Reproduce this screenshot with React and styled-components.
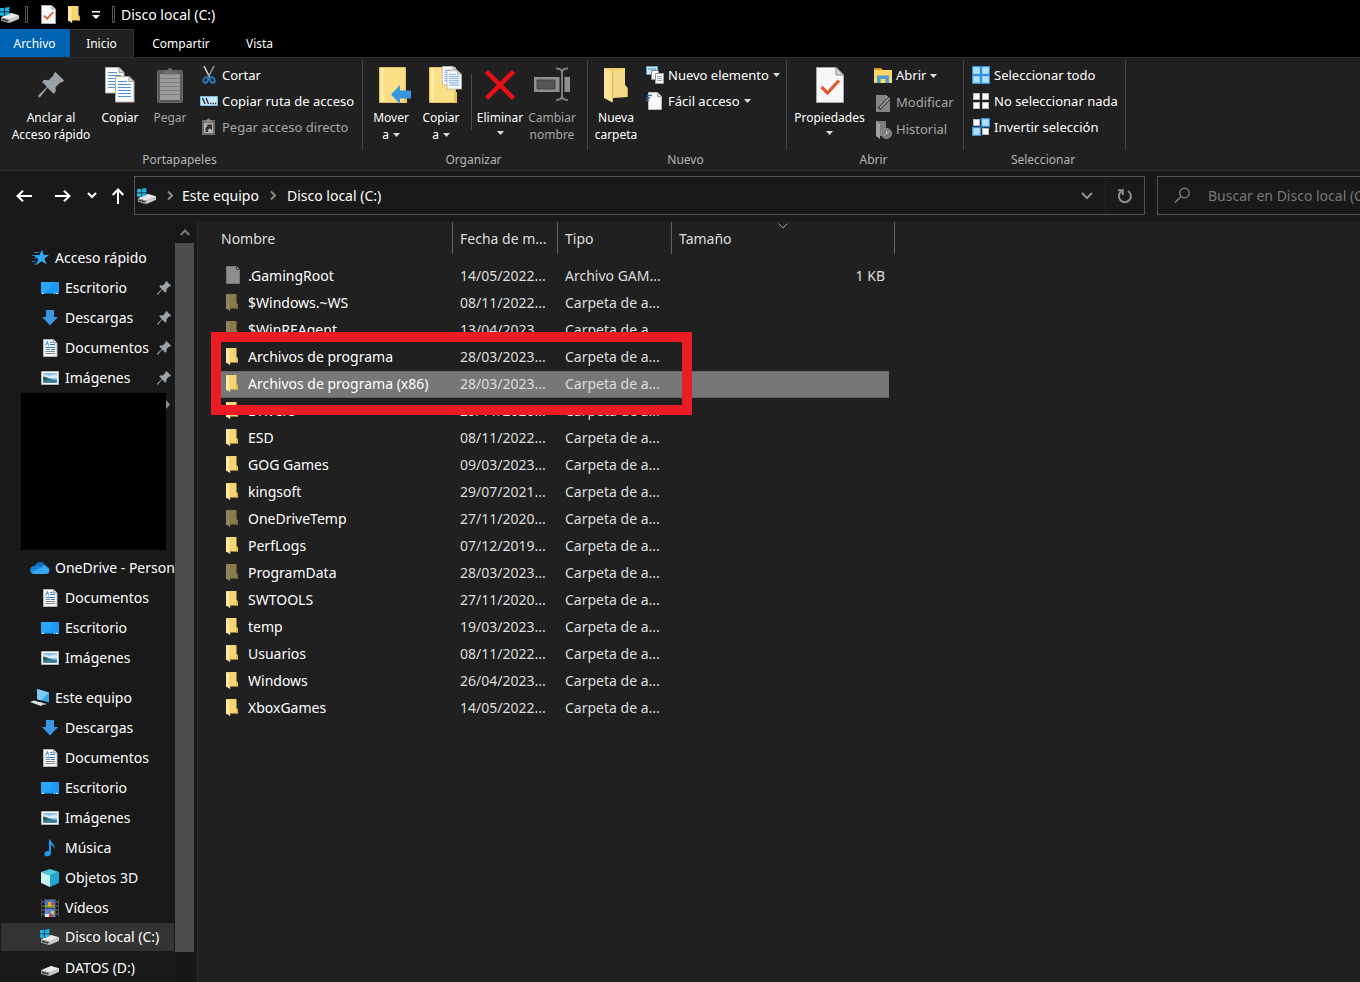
import React from "react";
import styled, { createGlobalStyle, css } from "styled-components";

const Global = createGlobalStyle`
  * { box-sizing: border-box; }
  body {
    margin: 0;
    background: #202020;
    color: #fff;
    font: 14px/20px "Noto Sans", "Open Sans", sans-serif;
  }
  button, input {
    margin: 0;
    padding: 0;
    border: 0;
    background: none;
    color: inherit;
    font: inherit;
  }
  a { color: inherit; text-decoration: none; }
  ul { margin: 0; padding: 0; list-style: none; }
  svg { display: block; flex: none; }
`;

/* ---------- icons ---------- */

const Drive = ({ windows = true }) => (
  <svg width="20" height="20" viewBox="0 0 20 20" aria-hidden="true">
    <path d="M1 12.5 11 8l8 2.2v3.6L9 18 1 15.8z" fill="#8d8d8d" />
    <path d="M1 12.3 11 8l8 2.4-9.6 4.2z" fill="#e9e9e9" />
    <path d="m9.4 14.6 9.6-4.2v3.4L9.4 18z" fill="#c9c9c9" />
    <path d="M1 12.3l8.4 2.3V18L1 15.8z" fill="#9a9a9a" />
    <path d="m2 13.6 6 1.6v1.2L2 14.9z" fill="#2e3a38" />
    {windows && (
      <path d="M0 3.3 4 2.8v3.6H0zM4.8 2.7 9.4 2v4.4H4.8zM0 7.2h4v3.7l-4-.5zM4.8 7.2h4.6v2L4.8 11z" fill="#1fb4e6" />
    )}
  </svg>
);

const CheckDoc = ({ w, h }) => (
  <svg width={w} height={h} viewBox="0 0 28 36" aria-hidden="true">
    <path d="M.5.5H20l7.5 7.5v27.5H.5z" fill="#f7f7f7" stroke="#a5a5a5" />
    <path d="M20 .5V8h7.5z" fill="#d6d6d6" stroke="#8c8c8c" />
    <path d="m5.500 20 6 6L23 13.500" fill="none" stroke="#e0592a" strokeWidth="3.200" />
  </svg>
);

const Folder = ({ w = 12, h = 17, dim }) => (
  <svg width={w} height={h} viewBox="0 0 24 34" preserveAspectRatio="none" opacity={dim ? 0.5 : 1} aria-hidden="true">
    <path d="M1 0h20v18l3 3v8H1z" fill="#f5d673" />
    <path d="M21 18l3 3v8h-4V18z" fill="#e3b94d" />
    <path d="M0 0l8 4v30l-6-4H0z" fill="#ffe9a2" />
    <path d="M8 4v30" stroke="#e3be60" />
  </svg>
);

const PinIcon = ({ size = 14 }) => (
  <svg width={size} height={size} viewBox="0 0 26 26" aria-hidden="true">
    <path d="M17.500 0 26 8.500l-2 2-1.500-.3-5 5 .3 4.300-2.300 2.300-6-6L1.800 25.500.2 24.800l.3-1.600 8.500-8.500L4 10l2.200-2.200 4.500.4 5-5L15.500 2z" fill="#9aa3aa" />
  </svg>
);

const Page = ({ x, y }) => (
  <g transform={`translate(${x} ${y})`}>
    <path d="M.5.5H14l5 5v20.500H.5z" fill="#fbfbfb" stroke="#b0b0b0" />
    <path d="M14 .5v5h5z" fill="#dcdcdc" stroke="#9d9d9d" />
    <path d="M3 5.500h9M3 8.500h13M3 11.500h13M3 14.500h13M3 17.500h13M3 20.500h13" stroke="#4f92dc" />
  </g>
);

const CopyIcon = () => (
  <svg width="30" height="36" viewBox="0 0 30 36" aria-hidden="true">
    <Page x={0} y={0} />
    <Page x={10} y={9} />
  </svg>
);

const PasteIcon = () => (
  <svg width="26" height="36" viewBox="0 0 26 36" aria-hidden="true">
    <rect x=".5" y="3.500" width="25" height="32" rx="1" fill="#5b5b5b" stroke="#666" />
    <path d="M3 7h20v26H3z" fill="#9b9b9b" />
    <path d="M3 11.500h20M3 15.500h20M3 19.500h20M3 23.500h20M3 27.500h20" stroke="#808080" />
    <path d="M5 7.500C6 4 10 5 11 2.500 11.500.5 14.500.5 15 2.500 16 5 20 4 21 7.500z" fill="#6e6e6e" />
  </svg>
);

const ScissorsIcon = () => (
  <svg width="18" height="18" viewBox="0 0 18 18" fill="none" aria-hidden="true">
    <path d="m4 0 5.500 11" stroke="#c8ccd0" strokeWidth="1.600" />
    <path d="M14 0 8.500 11" stroke="#8b9299" strokeWidth="1.600" />
    <ellipse cx="5.700" cy="14" rx="2.300" ry="3" transform="rotate(25 5.700 14)" stroke="#2583cf" strokeWidth="1.700" />
    <ellipse cx="12.300" cy="14" rx="2.300" ry="3" transform="rotate(-25 12.300 14)" stroke="#2583cf" strokeWidth="1.700" />
  </svg>
);

const PathIcon = () => (
  <svg width="18" height="18" viewBox="0 0 18 18" aria-hidden="true">
    <path d="M.5 4.500h17v9H.5z" fill="#cbe8fb" stroke="#7dbce8" />
    <path d="m2.500 6 2.500 6M6 6l2.500 6" stroke="#1b2a38" strokeWidth="1.400" />
    <path d="M10 11.500h1.300M12.500 11.500h1.300M15 11.500h1.300" stroke="#1b2a38" strokeWidth="1.300" />
  </svg>
);

const PasteLinkIcon = () => (
  <svg width="18" height="18" viewBox="0 0 18 18" aria-hidden="true">
    <path d="M2 2h13v15H2z" fill="#6c6c6c" />
    <path d="M5.500 2.500C6.500 2 7.500 1.500 8.500 0c1 1.500 2 2 3 2.500V4h-6z" fill="#8e8e8e" />
    <path d="M4 5h9v10H4z" fill="#b0b0b0" />
    <path d="M6 14c-1.500-3 0-5.500 2-6L6.500 6.500H12V12l-1.500-1.500C8.500 10.500 7.500 12 8 14z" fill="#333" />
  </svg>
);

const BigFolder = ({ children }) => (
  <svg width="42" height="38" viewBox="-8 0 42 38" aria-hidden="true">
    <path d="M1.500 1.500h26v25l1 1v9h-27z" fill="#fbdf86" stroke="#e2bf60" />
    <path d="M4.500 2v34" stroke="#ffefb4" strokeWidth="2" />
    <path d="M26 26h3v11h-3z" fill="#e9c35c" />
    {children}
  </svg>
);

const MoveIcon = () => (
  <BigFolder>
    <path d="M13 28.500 22 19v5.500h11v8H22V38z" fill="#3895e0" />
  </BigFolder>
);

const CopyToIcon = () => (
  <BigFolder>
    <g transform="translate(14 0) scale(.78 .72)">
      <Page x={0} y={0} />
      <Page x={6} y={6} />
    </g>
  </BigFolder>
);

const DeleteIcon = () => (
  <svg width="30" height="38" viewBox="0 0 30 38" aria-hidden="true">
    <path d="m1.500 5.500 27 27M28.500 5.500l-27 27" stroke="#e50f17" strokeWidth="4.500" />
  </svg>
);

const RenameIcon = () => (
  <svg width="38" height="38" viewBox="0 0 38 38" fill="none" aria-hidden="true">
    <path d="M1 11h36v15H1z" fill="#8f8f8f" />
    <path d="M4 14h18v9H4z" fill="#555" stroke="#444" />
    <path d="M29 5v28" stroke="#202020" strokeWidth="5" />
    <path d="M29 6v25M23 2.500c4 0 6 1 6 4 0-3 2-4 6-4M23 34c4 0 6-1 6-4 0 3 2 4 6 4" stroke="#7c7c7c" strokeWidth="2" />
  </svg>
);

const NewFolderIcon = () => (
  <svg width="24" height="36" viewBox="0 0 24 36" aria-hidden="true">
    <path d="M1 1h20v17l2.500 3v9H1z" fill="#f0cd6c" />
    <path d="M9 4 21 1v17l2.500 3v9L9 31z" fill="#f6d987" />
    <path d="M0 1l8.500 4v30.500L0 31z" fill="#fde49a" />
    <path d="M8.500 5v30" stroke="#d8b054" />
  </svg>
);

const NewItemIcon = () => (
  <svg width="18" height="18" viewBox="0 0 18 18" aria-hidden="true">
    <path d="M.5.5h11v8H.5z" fill="#cfe9f6" stroke="#5ba3cc" />
    <path d="M2 3h8" stroke="#3c8cc0" />
    <path d="M5.500 4.500h7v9h-7z" fill="#f2f2f2" stroke="#8c8c8c" />
    <path d="M9.500 7.500h8v10h-8z" fill="#f8f8f8" stroke="#9c9c9c" />
    <path d="M11 10.500h5M11 12.500h5M11 14.500h5" stroke="#8ba7bd" />
  </svg>
);

const EasyAccessIcon = () => (
  <svg width="18" height="18" viewBox="0 0 18 18" aria-hidden="true">
    <path d="M2.500.5h9l4 4v13h-13z" fill="#f8f8f8" stroke="#b9b9b9" />
    <path d="M11.500.5v4h4" fill="#ddd" stroke="#999" />
    <path d="M1 3.500h5M0 6h4M0 8.500h3" stroke="#2c6ea8" strokeWidth="1.300" />
  </svg>
);

const OpenIcon = () => (
  <svg width="18" height="18" viewBox="0 0 18 18" aria-hidden="true">
    <path d="M0 1h7l2 2H0z" fill="#e0961d" />
    <path d="M0 3h18v13H0z" fill="#fcd667" />
    <path d="M3 16V8.500h12V16h-3.500v-4h-5v4z" fill="#4b9bd6" />
  </svg>
);

const EditIcon = () => (
  <svg width="18" height="18" viewBox="0 0 18 18" aria-hidden="true">
    <path d="M2 1h10l4 4v13H2z" fill="#858585" />
    <path d="M12 1v4h4" fill="#aaa" />
    <path d="m5 15 10.500-11" stroke="#3c3c3c" strokeWidth="3.500" />
    <path d="m6 14 9.500-10" stroke="#a9a9a9" strokeWidth="1.500" />
  </svg>
);

const HistoryIcon = () => (
  <svg width="18" height="18" viewBox="0 0 18 18" aria-hidden="true">
    <path d="M2 0h10v15H2z" fill="#7b7b7b" />
    <path d="M2 0l4 3v15l-4-3z" fill="#a0a0a0" />
    <circle cx="12.500" cy="12.500" r="5" fill="#777" stroke="#999" />
    <path d="M12.500 9.500v3l-2.500 2M12.500 12.500l3-2" stroke="#c0c0c0" fill="none" />
  </svg>
);

const SelectGrid = ({ on }) => (
  <svg width="18" height="18" viewBox="0 0 18 18" aria-hidden="true">
    {[[0, 0], [9, 0], [0, 9], [9, 9]].map(([x, y], i) =>
      on[i] ? (
        <rect key={i} x={x + 0.5} y={y + 0.5} width="8" height="8" fill="#b5e0fb" stroke="#3193dd" strokeWidth="1.400" />
      ) : (
        <rect key={i} x={x + 1.500} y={y + 1.500} width="6" height="6" fill="#fff" stroke="#b8b8b8" />
      )
    )}
  </svg>
);

const StarIcon = () => (
  <svg width="20" height="20" viewBox="0 0 20 20" aria-hidden="true">
    <path d="M4 4.500h5M2 7.500h5M4 10h4M2 13.500h4M4 16h3" stroke="#1f78be" />
    <path d="m12 1.500 1.500 5.300 5.500.2-4.500 3.500 2 6-4.800-3.200L6 17l2.300-6L4 7.500l5.600-.5z" fill="#37a5f2" />
  </svg>
);

const DesktopIcon = () => (
  <svg width="20" height="20" viewBox="0 0 20 20" aria-hidden="true">
    <path d="M1 4h18v12H1z" fill="#1b9bf5" />
    <path d="M1 4h13L5 16H1z" fill="#38aefc" opacity=".6" />
    <path d="M1 15.500h18" stroke="#0b62a8" />
    <path d="M2 15.500h2M14 15.500h1M16 15.500h2" stroke="#dff1ff" />
  </svg>
);

const DownloadIcon = () => (
  <svg width="20" height="20" viewBox="0 0 20 20" aria-hidden="true">
    <path d="M6 2h8v7h4l-8 8.500L2 9h4z" fill="#3b94e4" />
  </svg>
);

const DocIcon = () => (
  <svg width="20" height="20" viewBox="0 0 20 20" aria-hidden="true">
    <path d="M3.500 1.500h10l3.500 3.500v13.500H3.500z" fill="#f8f8f8" stroke="#b5b5b5" />
    <path d="M13.500 1.500V5H17" fill="#ddd" stroke="#999" />
    <path d="m5.500 7.500 2-4 1 4M10 4.500h2.500M10 6.500h5M5.500 9.500h9.500M11 11.500h4" stroke="#2f83c4" fill="none" />
    <path d="M5.500 11.500h4.500M5.500 13.500h9.500M5.500 15.500h9.500" stroke="#7e8a94" />
  </svg>
);

const ImageIcon = () => (
  <svg width="20" height="20" viewBox="0 0 20 20" aria-hidden="true">
    <path d="M1.500 3.500h17v13h-17z" fill="#fff" stroke="#b5b5b5" />
    <path d="M3 5h14v10H3z" fill="#8dc4ee" />
    <path d="M3 7.500c3-2 5 1 8 0s4-1 6-.500V10H3z" fill="#d7ecfa" />
    <path d="M3 8.500c4 0 6 3.500 14 3.500v1H3z" fill="#2f6b62" />
    <path d="M3 12.500h14V15H3z" fill="#3d7fae" />
  </svg>
);

const CloudIcon = () => (
  <svg width="20" height="20" viewBox="0 0 20 20" aria-hidden="true">
    <path d="M5 8a5.500 5.500 0 0 1 10-1.500L12 11z" fill="#0f6cbd" />
    <path d="M4.500 8C7 7 9 8 11 9.500L7 16H4a4 4 0 0 1 .5-8z" fill="#1583d8" />
    <path d="M11 9.500C12.500 7 16 6.500 17 9a3.600 3.600 0 0 1-1 7H5c-2 0-3-1-3.500-2z" fill="#35a7f0" />
  </svg>
);

const ComputerIcon = () => (
  <svg width="20" height="20" viewBox="0 0 20 20" aria-hidden="true">
    <path d="m7 1 12 3.500v10L7 11z" fill="#3ba5ec" />
    <path d="m7 1 12 3.500-8 8L7 11z" fill="#7fcbf8" />
    <path d="m10 14 7 2-3 1-7-2z" fill="#b5b5b5" />
    <path d="m0 14 4-1.500 10 3-3 2.500z" fill="#dde1e6" />
  </svg>
);

const MusicIcon = () => (
  <svg width="20" height="20" viewBox="0 0 20 20" aria-hidden="true">
    <path d="M9 1.500h1.500c.5 4 5 4.500 4 9.500-.5-2.500-2-3.500-3.500-4V15c0 4-6.500 4.500-6.500 1.200C4.500 13.500 7 12.500 9 13z" fill="#1c9cf0" />
  </svg>
);

const CubeIcon = () => (
  <svg width="20" height="20" viewBox="0 0 20 20" aria-hidden="true">
    <path d="m10 1 9 3-9 3.500L1 4z" fill="#4cc9dd" />
    <path d="m1 4 9 3.500V19l-9-4z" fill="#c5f3f4" />
    <path d="m19 4-9 3.500V19l9-4z" fill="#22a6cf" />
  </svg>
);

const VideoIcon = () => (
  <svg width="20" height="20" viewBox="0 0 20 20" aria-hidden="true">
    <path d="M1 1h18v18H1z" fill="#4a4a4a" />
    <path d="M3 1v18M17 1v18" stroke="#171717" strokeWidth="2" strokeDasharray="2 2" />
    <path d="M5 2h10v7.500H5z" fill="#4b6fc9" />
    <path d="M5 11h10v8H5z" fill="#5b86dd" />
    <path d="M5 7h10v2.500H5z" fill="#7ba437" />
    <path d="M8 4h4v4H8z" fill="#e1ac35" />
    <path d="M11 5h3v2h-3zM9 16h4v3H9z" fill="#c64a4a" />
    <path d="M5 16h4v3H5z" fill="#e6e6e6" />
    <path d="M11 13h3v3h-3z" fill="#eac13d" />
  </svg>
);

const FileIcon = () => (
  <svg width="14" height="18" viewBox="0 0 14 18" aria-hidden="true">
    <path d="M.5.5h10l3 3v14H.5z" fill="#8e8e8e" stroke="#777" />
    <path d="M10.500.5v3h3" fill="#8e8e8e" stroke="#444" />
  </svg>
);

const Line = ({ w, h, d, color = "#fff", stroke = 2 }) => (
  <svg width={w} height={h} viewBox={`0 0 ${w} ${h}`} fill="none" aria-hidden="true">
    <path d={d} stroke={color} strokeWidth={stroke} />
  </svg>
);

const Caret = () => (
  <svg width="7" height="4" viewBox="0 0 7 4" aria-hidden="true">
    <path d="M0 0h7L3.500 4z" fill="#dcdcdc" />
  </svg>
);

/* ---------- window frame ---------- */

const Window = styled.div`
  display: flex;
  flex-direction: column;
  height: 100vh;
  overflow: hidden;
`;

const TitleBar = styled.header`
  display: flex;
  flex: none;
  align-items: center;
  height: 29px;
  background: #000;
`;

const TitleTools = styled.div`
  display: flex;
  align-items: center;
  gap: 12px;
  padding: 0 12px;
`;

const TitleSeparator = styled.span`
  width: 3px;
  height: 17px;
  margin-left: ${(p) => (p.$spaced ? 5 : 0)}px;
  border: 1px solid #555;
`;

const IconButton = styled.button`
  display: flex;
  align-items: center;
  justify-content: center;
  flex: none;
  width: ${(p) => p.$w}px;
  height: ${(p) => p.$h || 20}px;
`;

const Title = styled.h1`
  margin: 0 0 0 6px;
  font-size: 14px;
  font-weight: 400;
`;

const Tabs = styled.nav`
  display: flex;
  flex: none;
  height: 28px;
  background: #000;
  font-size: 12px;
`;

const Tab = styled.button`
  width: ${(p) => p.$w}px;
  border: 1px solid transparent;
  border-width: 1px 1px 0 0;
  ${(p) => p.$kind === "file" && css`background: #0063b1;`}
  ${(p) =>
    p.$kind === "active" &&
    css`
      background: #202020;
      border-color: #333;
    `}
`;

/* ---------- ribbon ---------- */

const Ribbon = styled.section`
  display: flex;
  flex: none;
  height: 114px;
  border-top: 1px solid #2c2c2c;
  border-bottom: 1px solid #303030;
  background: #202020;
  font-size: 12px;
  line-height: 17px;
`;

const Group = styled.div`
  display: flex;
  flex-direction: column;
  flex: none;
  width: ${(p) => p.$w}px;
  padding-top: 2px;
`;

const Tools = styled.div`
  display: flex;
  height: 90px;
  padding-left: ${(p) => p.$pad || 0}px;
  border-right: 1px solid #444;
`;

const GroupLabel = styled.span`
  padding: 1px 4px 0 0;
  color: #b4b4b4;
  text-align: center;
`;

const BigButton = styled.button`
  display: flex;
  flex-direction: column;
  align-items: center;
  flex: none;
  width: ${(p) => p.$w}px;
  padding-top: 6px;
  white-space: nowrap;
  color: ${(p) => (p.disabled ? "#a6a6a6" : "#fff")};
`;

const BigIcon = styled.span`
  display: flex;
  align-items: center;
  height: 38px;
  margin-bottom: 5px;
`;

const LabelLine = styled.span`
  display: flex;
  align-items: center;
  gap: 4px;
  min-height: 14px;
`;

const SmallColumn = styled.div`
  display: grid;
  align-content: start;
  justify-items: start;
  grid-auto-rows: ${(p) => p.$pitch || 26}px;
  padding: 2px 0 0 2px;
`;

const SmallButton = styled.button`
  display: flex;
  align-items: center;
  gap: 4px;
  font-size: 13px;
  white-space: nowrap;
  color: ${(p) => (p.disabled ? "#a6a6a6" : "#fff")};
`;

const ToolDivider = styled.span`
  width: 1px;
  height: 56px;
  margin: 14px 3px 0 5px;
  background: #4c4c4c;
`;

function Big({ w, icon, lines, caret, disabled }) {
  return (
    <BigButton $w={w} disabled={disabled}>
      <BigIcon>{icon}</BigIcon>
      {lines.map((line, i) => (
        <LabelLine key={line}>
          {line}
          {caret && i > 0 && <Caret />}
        </LabelLine>
      ))}
      {caret && lines.length === 1 && (
        <LabelLine>
          <Caret />
        </LabelLine>
      )}
    </BigButton>
  );
}

function Small({ icon, label, caret, disabled }) {
  return (
    <SmallButton disabled={disabled}>
      {icon}
      {label}
      {caret && <Caret />}
    </SmallButton>
  );
}

/* ---------- address row ---------- */

const AddressRow = styled.div`
  display: flex;
  flex: none;
  height: 50px;
  padding: 5px 0 6px 4px;
  background: #191919;
`;

const AddressBox = styled.div`
  display: flex;
  align-items: center;
  flex: 1;
  margin-right: 12px;
  padding-left: 2px;
  border: 1px solid #535353;
`;

const Crumb = styled.a`
  white-space: nowrap;
`;

const Spacer = styled.span`
  flex: 1;
`;

const RefreshButton = styled(IconButton)`
  border-left: 1px solid #242424;
`;

const SearchBox = styled.label`
  display: flex;
  align-items: center;
  flex: 0 0 203px;
  gap: 17px;
  min-width: 0;
  padding-left: 16px;
  border: 1px solid #535353;
  border-right: 0;
`;

const SearchInput = styled.input`
  flex: 1;
  width: 0;
  min-width: 0;
  outline: 0;
  &::placeholder { color: #777; opacity: 1; }
`;

/* ---------- navigation tree ---------- */

const Body = styled.div`
  display: flex;
  flex: 1;
  min-height: 0;
  background: #191919;
`;

const Tree = styled.nav`
  flex: none;
  width: 175px;
  padding-top: 22px;
  overflow: hidden;
`;

const TreeGroup = styled.ul`
  margin-top: ${(p) => p.$gap || 0}px;
`;

const TreeLink = styled.a`
  display: flex;
  align-items: center;
  gap: 5px;
  height: 30px;
  padding-left: ${(p) => (p.$root ? 30 : 40)}px;
  white-space: nowrap;
  ${(p) =>
    p.$current &&
    css`
      background: #333;
      border: solid #191919;
      border-width: 0 1px 2px 1px;
      padding-left: 39px;
    `}
`;

const PinSlot = styled.span`
  margin: 0 4px 0 auto;
`;

const HiddenBlock = styled.div`
  display: flex;
  height: 157px;
  margin-left: 21px;
`;

const HiddenFill = styled.div`
  width: 145px;
  background: #000;
`;

const HiddenArrow = styled.span`
  padding-top: 7px;
`;

const ScrollBar = styled.div`
  display: flex;
  flex-direction: column;
  flex: none;
  width: 19px;
  padding-bottom: 30px;
  background: #171717;
`;

const ScrollThumb = styled.div`
  flex: 1;
  background: #4d4d4d;
`;

/* ---------- file list ---------- */

const Files = styled.main`
  flex: 1;
  min-width: 0;
  margin-left: 3px;
  padding: 1px 0 0 23px;
  border-left: 1px solid #2b2b2b;
  background: #202020;
`;

const TableWrap = styled.div`
  position: relative;
  width: max-content;
`;

const FileTable = styled.table`
  width: 674px;
  table-layout: fixed;
  border-collapse: separate;
  border-spacing: 0;
  color: #dedede;

  tbody::before {
    content: "";
    display: block;
    height: 9px;
  }
`;

const HeadCell = styled.th`
  position: relative;
  height: 32px;
  padding: 2px 7px 0;
  border-right: 1px solid #636363;
  text-align: left;
  font-weight: 400;
  white-space: nowrap;
  overflow: hidden;
  &:first-child { padding-left: 0; }
`;

const SortMark = styled.span`
  position: absolute;
  top: 1px;
  left: 50%;
  margin-left: -5px;
`;

const Row = styled.tr`
  td {
    ${(p) =>
      p.$selected &&
      css`
        background: #777;
        box-shadow: inset 0 1px #666, inset 0 -1px #666;
      `}
  }
`;

const Cell = styled.td`
  height: 27px;
  padding: 0 4px 1px 7px;
  overflow: hidden;
  white-space: nowrap;
  text-align: ${(p) => (p.$right ? "right" : "left")};
`;

const NameCell = styled(Cell)`
  padding-left: 5px;
  color: #fff;
`;

const NameInner = styled.span`
  display: flex;
  align-items: center;
`;

const FileGlyph = styled.span`
  width: 22px;
  padding-bottom: 2px;
`;

const Highlight = styled.div`
  position: absolute;
  top: 110px;
  left: -10px;
  width: 481px;
  height: 83px;
  border: 10px solid #ec1c24;
  pointer-events: none;
`;

const files = [
  [".GamingRoot", "14/05/2022...", "file"],
  ["$Windows.~WS", "08/11/2022...", "dim"],
  ["$WinREAgent", "13/04/2023...", "dim"],
  ["Archivos de programa", "28/03/2023..."],
  ["Archivos de programa (x86)", "28/03/2023...", "selected"],
  ["Drivers", "29/11/2020..."],
  ["ESD", "08/11/2022..."],
  ["GOG Games", "09/03/2023..."],
  ["kingsoft", "29/07/2021..."],
  ["OneDriveTemp", "27/11/2020...", "dim"],
  ["PerfLogs", "07/12/2019..."],
  ["ProgramData", "28/03/2023...", "dim"],
  ["SWTOOLS", "27/11/2020..."],
  ["temp", "19/03/2023..."],
  ["Usuarios", "08/11/2022..."],
  ["Windows", "26/04/2023..."],
  ["XboxGames", "14/05/2022..."],
];

const quick = [
  ["Acceso rápido", StarIcon, "root"],
  ["Escritorio", DesktopIcon, "pin"],
  ["Descargas", DownloadIcon, "pin"],
  ["Documentos", DocIcon, "pin"],
  ["Imágenes", ImageIcon, "pin"],
];
const oneDrive = [
  ["OneDrive - Person", CloudIcon, "root"],
  ["Documentos", DocIcon],
  ["Escritorio", DesktopIcon],
  ["Imágenes", ImageIcon],
];
const computer = [
  ["Este equipo", ComputerIcon, "root"],
  ["Descargas", DownloadIcon],
  ["Documentos", DocIcon],
  ["Escritorio", DesktopIcon],
  ["Imágenes", ImageIcon],
  ["Música", MusicIcon],
  ["Objetos 3D", CubeIcon],
  ["Vídeos", VideoIcon],
  ["Disco local (C:)", Drive, "current"],
  ["DATOS (D:)", () => <Drive windows={false} />],
];

function TreeSection({ items, gap }) {
  return (
    <TreeGroup $gap={gap}>
      {items.map(([label, Icon, kind]) => (
        <li key={label}>
          <TreeLink href="#" $root={kind === "root"} $current={kind === "current"}>
            <Icon />
            {label}
            {kind === "pin" && (
              <PinSlot>
                <PinIcon />
              </PinSlot>
            )}
          </TreeLink>
        </li>
      ))}
    </TreeGroup>
  );
}

export default function App() {
  return (
    <Window>
      <Global />
      <TitleBar>
        <Drive />
        <TitleSeparator $spaced />
        <TitleTools>
          <IconButton $w={16} aria-label="Propiedades">
            <CheckDoc w={15} h={19} />
          </IconButton>
          <IconButton $w={12} aria-label="Nueva carpeta">
            <Folder />
          </IconButton>
          <IconButton $w={8} aria-label="Personalizar barra">
            <svg width="8" height="8" viewBox="0 0 8 8" aria-hidden="true">
              <path d="M0 0h8v1.500H0zM0 4h8L4 8z" fill="#fff" />
            </svg>
          </IconButton>
        </TitleTools>
        <TitleSeparator />
        <Title>Disco local (C:)</Title>
      </TitleBar>

      <Tabs>
        <Tab $w={70} $kind="file">Archivo</Tab>
        <Tab $w={64} $kind="active">Inicio</Tab>
        <Tab $w={95}>Compartir</Tab>
        <Tab $w={62}>Vista</Tab>
      </Tabs>

      <Ribbon>
        <Group $w={363}>
          <Tools $pad={4}>
            <Big w={94} icon={<PinIcon size={26} />} lines={["Anclar al", "Acceso rápido"]} />
            <Big w={44} icon={<CopyIcon />} lines={["Copiar"]} />
            <Big w={56} icon={<PasteIcon />} lines={["Pegar"]} disabled />
            <SmallColumn>
              <Small icon={<ScissorsIcon />} label="Cortar" />
              <Small icon={<PathIcon />} label="Copiar ruta de acceso" />
              <Small icon={<PasteLinkIcon />} label="Pegar acceso directo" disabled />
            </SmallColumn>
          </Tools>
          <GroupLabel>Portapapeles</GroupLabel>
        </Group>
        <Group $w={225}>
          <Tools $pad={3}>
            <Big w={50} icon={<MoveIcon />} lines={["Mover", "a"]} caret />
            <Big w={50} icon={<CopyToIcon />} lines={["Copiar", "a"]} caret />
            <ToolDivider />
            <Big w={50} icon={<DeleteIcon />} lines={["Eliminar"]} caret />
            <Big w={54} icon={<RenameIcon />} lines={["Cambiar", "nombre"]} disabled />
          </Tools>
          <GroupLabel>Organizar</GroupLabel>
        </Group>
        <Group $w={199}>
          <Tools>
            <Big w={56} icon={<NewFolderIcon />} lines={["Nueva", "carpeta"]} />
            <SmallColumn>
              <Small icon={<NewItemIcon />} label="Nuevo elemento" caret />
              <Small icon={<EasyAccessIcon />} label="Fácil acceso" caret />
            </SmallColumn>
          </Tools>
          <GroupLabel>Nuevo</GroupLabel>
        </Group>
        <Group $w={177}>
          <Tools>
            <Big w={85} icon={<CheckDoc w={28} h={36} />} lines={["Propiedades"]} caret />
            <SmallColumn $pitch={27}>
              <Small icon={<OpenIcon />} label="Abrir" caret />
              <Small icon={<EditIcon />} label="Modificar" disabled />
              <Small icon={<HistoryIcon />} label="Historial" disabled />
            </SmallColumn>
          </Tools>
          <GroupLabel>Abrir</GroupLabel>
        </Group>
        <Group $w={162}>
          <Tools $pad={6}>
            <SmallColumn>
              <Small icon={<SelectGrid on={[1, 1, 1, 1]} />} label="Seleccionar todo" />
              <Small icon={<SelectGrid on={[0, 0, 0, 0]} />} label="No seleccionar nada" />
              <Small icon={<SelectGrid on={[0, 1, 1, 0]} />} label="Invertir selección" />
            </SmallColumn>
          </Tools>
          <GroupLabel>Seleccionar</GroupLabel>
        </Group>
      </Ribbon>

      <AddressRow>
        <IconButton $w={39} $h={39} aria-label="Atrás">
          <Line w={16} h={12} d="M16 6H1.500M7 .7 1.500 6 7 11.300" />
        </IconButton>
        <IconButton $w={39} $h={39} aria-label="Adelante">
          <Line w={16} h={12} d="M0 6h14.500M9 .7 14.500 6 9 11.300" />
        </IconButton>
        <IconButton $w={20} $h={39} aria-label="Ubicaciones recientes">
          <Line w={10} h={7} d="m1 1 4 4 4-4" />
        </IconButton>
        <IconButton $w={32} $h={39} aria-label="Subir">
          <Line w={12} h={16} d="M6 16V1.500M.7 7 6 1.500 11.300 7" />
        </IconButton>
        <AddressBox>
          <Drive />
          <IconButton $w={25} aria-label="Ver ubicaciones">
            <Line w={6} h={9} d="m1 .5 4 4-4 4" color="#8a8a8a" />
          </IconButton>
          <Crumb href="#">Este equipo</Crumb>
          <IconButton $w={28} aria-label="Ver carpetas">
            <Line w={6} h={9} d="m1 .5 4 4-4 4" color="#8a8a8a" />
          </IconButton>
          <Crumb href="#">Disco local (C:)</Crumb>
          <Spacer />
          <IconButton $w={36} $h={37} aria-label="Ubicaciones anteriores">
            <Line w={12} h={8} d="m1 1 5 5 5-5" color="#8f8f8f" />
          </IconButton>
          <RefreshButton $w={39} $h={37} aria-label="Actualizar">
            <Line w={16} h={16} d="M4.500 3.200A6 6 0 1 0 11 3M1 2.200h4.800V7" color="#8f8f8f" />
          </RefreshButton>
        </AddressBox>
        <SearchBox>
          <svg width="17" height="17" viewBox="0 0 17 17" fill="none" aria-hidden="true">
            <circle cx="10.500" cy="6" r="4.800" stroke="#8a8a8a" strokeWidth="1.200" />
            <path d="m7 9.500-6 6" stroke="#8a8a8a" strokeWidth="1.200" />
          </svg>
          <SearchInput type="text" aria-label="Buscar" placeholder="Buscar en Disco local (C:)" />
        </SearchBox>
      </AddressRow>

      <Body>
        <Tree>
          <TreeSection items={quick} />
          <HiddenBlock>
            <HiddenFill />
            <HiddenArrow>
              <svg width="4" height="9" viewBox="0 0 4 9" aria-hidden="true">
                <path d="M0 0l4 4.500L0 9z" fill="#8d8d8d" />
              </svg>
            </HiddenArrow>
          </HiddenBlock>
          <TreeSection items={oneDrive} gap={3} />
          <TreeSection items={computer} gap={10} />
        </Tree>
        <ScrollBar>
          <IconButton $w={19} $h={22} aria-label="Desplazar arriba">
            <Line w={10} h={7} d="m.7 6 4.300-4.500L9.300 6" color="#777" />
          </IconButton>
          <ScrollThumb />
        </ScrollBar>
        <Files>
          <TableWrap>
            <FileTable>
              <colgroup>
                <col style={{ width: 232 }} />
                <col style={{ width: 105 }} />
                <col style={{ width: 114 }} />
                <col style={{ width: 217 }} />
                <col style={{ width: 6 }} />
              </colgroup>
              <thead>
                <tr>
                  <HeadCell>Nombre</HeadCell>
                  <HeadCell>Fecha de m...</HeadCell>
                  <HeadCell>Tipo</HeadCell>
                  <HeadCell colSpan={2}>
                    Tamaño
                    <SortMark>
                      <Line w={10} h={6} d="m.5.5 4.500 4.500L9.500.5" color="#a0a0a0" stroke={1} />
                    </SortMark>
                  </HeadCell>
                </tr>
              </thead>
              <tbody>
                {files.map(([name, date, kind]) => (
                  <Row key={name} $selected={kind === "selected"}>
                    <NameCell>
                      <NameInner>
                        <FileGlyph>{kind === "file" ? <FileIcon /> : <Folder dim={kind === "dim"} />}</FileGlyph>
                        {name}
                      </NameInner>
                    </NameCell>
                    <Cell>{date}</Cell>
                    <Cell>{kind === "file" ? "Archivo GAM..." : "Carpeta de a..."}</Cell>
                    <Cell $right>{kind === "file" ? "1 KB" : ""}</Cell>
                  </Row>
                ))}
              </tbody>
            </FileTable>
            <Highlight />
          </TableWrap>
        </Files>
      </Body>
    </Window>
  );
}
